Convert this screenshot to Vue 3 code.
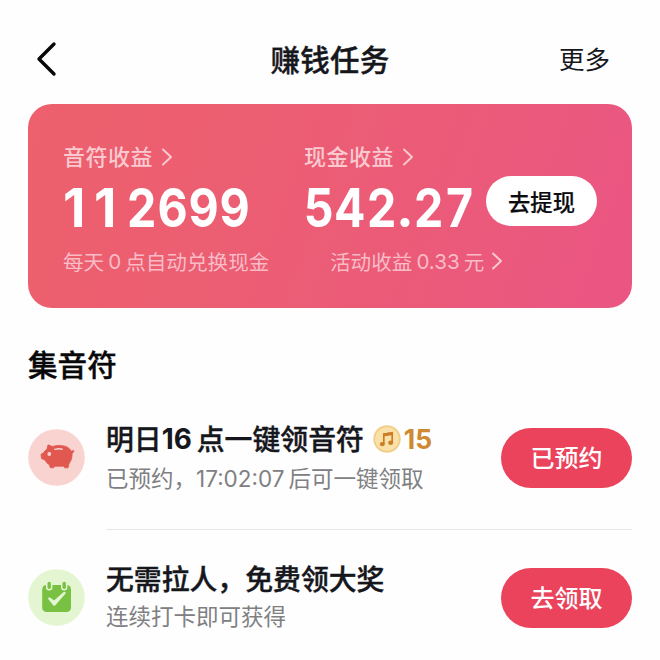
<script setup>
const tasks = [
  {
    id: 'piggy',
    title: ['明日', '16', '点一键领音符'],
    desc: ['已预约，', '17:02:07', '后可一键领取'],
    reward: '15',
    action: '已预约',
  },
  {
    id: 'calendar',
    title: ['无需拉人，免费领大奖'],
    desc: ['连续打卡即可获得'],
    action: '去领取',
  },
]
const notes = [...'112699']
const cash = [...'542.27']
const isNumber = (s) => /^\d/.test(s)
const digitClass = (c) => ({ one: c === '1', dot: c === '.' })
</script>

<template>
  <main class="page">
    <header class="nav">
      <svg class="back" width="22" height="36" viewBox="0 0 22 36">
        <path d="M18 3 3 18 18 33" />
      </svg>
      <h1>赚钱任务</h1>
      <span class="more">更多</span>
    </header>

    <section class="card">
      <div class="col notes">
        <div class="label">
          <span>音符收益</span>
          <svg width="12" height="18" viewBox="0 0 12 18"><path d="M2 1.500 10 9 2 16.500" /></svg>
        </div>
        <div class="amount"><span v-for="(c, i) in notes" :key="i" :class="digitClass(c)">{{ c }}</span></div>
        <div class="hint">每天<span class="num">0</span>点自动兑换现金</div>
      </div>
      <div class="col cash">
        <div class="label">
          <span>现金收益</span>
          <svg width="12" height="18" viewBox="0 0 12 18"><path d="M2 1.500 10 9 2 16.500" /></svg>
        </div>
        <div class="amount"><span v-for="(c, i) in cash" :key="i" :class="digitClass(c)">{{ c }}</span></div>
        <div class="hint activity">
          活动收益<span class="num">0.33</span>元
          <svg width="12" height="18" viewBox="0 0 12 18"><path d="M2 1.500 10 9 2 16.500" /></svg>
        </div>
      </div>
      <button class="withdraw">去提现</button>
    </section>

    <h2>集音符</h2>

    <section class="list">
      <article v-for="task in tasks" :key="task.id" class="task" :class="task.id">
        <svg v-if="task.id === 'piggy'" class="icon" viewBox="0 0 57 57">
          <circle cx="28.500" cy="28.500" r="28.300" fill="#f9d3cf" />
          <path
            fill="#e0584f"
            stroke="#e0584f"
            stroke-width="0.800"
            stroke-linejoin="round"
            d="M20 15.800 24.500 17.600C28 16 35 15.900 39.500 18.200 41.400 19.400 42.600 20.900 43.200 22.200 44.200 22.200 44.800 21.300 45.800 21.600 46.200 22.300 45.200 23.800 44.100 24.400 44.300 28.300 43.200 31.800 41 34.800L40 38.800H36.600L35.700 37.200H26.800L25.800 38.800H22.400L21.400 35.800C19.400 34.600 18 33 17 31L13.500 29.600 13 25.300 15.600 23.800C16.400 22.300 17.400 21.200 18.900 20.300Z"
          />
          <circle cx="21.300" cy="25" r="1.900" fill="#f9d3cf" />
          <path d="M26.800 20.400Q30.500 19.300 34.200 20.200" fill="none" stroke="#f9d3cf" stroke-width="1.400" stroke-linecap="round" />
        </svg>
        <svg v-else class="icon" viewBox="0 0 57 57">
          <circle cx="28.500" cy="28.500" r="28.300" fill="#e3f6d1" />
          <rect x="14.200" y="16" width="28.800" height="27" rx="4.300" fill="#79c142" />
          <rect x="18" y="11" width="6.400" height="10.500" rx="3.200" fill="#e3f6d1" />
          <rect x="33" y="11" width="6.400" height="10.500" rx="3.200" fill="#e3f6d1" />
          <rect x="19.500" y="12.800" width="3.400" height="7.200" rx="1.700" fill="#79c142" />
          <rect x="34.500" y="12.800" width="3.400" height="7.200" rx="1.700" fill="#79c142" />
          <path d="M21.300 29.600 26.200 35.600 36.500 24 26.200 33Z" fill="#e3f6d1" stroke="#e3f6d1" stroke-width="2.400" stroke-linejoin="round" />
        </svg>

        <div class="info">
          <div class="title">
            <span v-for="part in task.title" :key="part" :class="isNumber(part) ? 'num' : 'han'">{{ part }}</span>
            <template v-if="task.reward">
              <svg class="coin" width="28" height="28" viewBox="0 0 28 28">
                <circle cx="14" cy="14" r="13.700" fill="#f2cf88" />
                <circle cx="14" cy="14" r="11.800" fill="#fae0a9" />
                <path d="M10.800 19V9.200L19.200 7.800V17.700" fill="none" stroke="#cb7f27" stroke-width="1.700" />
                <path d="M10 8.600 20 7V10L10 11.600Z" fill="#cb7f27" />
                <ellipse cx="9.300" cy="19.100" rx="2.500" ry="2.200" fill="#cb7f27" />
                <ellipse cx="17.700" cy="17.800" rx="2.500" ry="2.200" fill="#cb7f27" />
              </svg>
              <span class="reward">{{ task.reward }}</span>
            </template>
          </div>
          <div class="desc">
            <span v-for="part in task.desc" :key="part" :class="isNumber(part) ? 'num' : 'han'">{{ part }}</span>
          </div>
        </div>
        <button class="action">{{ task.action }}</button>
      </article>
    </section>
  </main>
</template>

<style>
body {
  margin: 0;
  background: #fefefe;
}
</style>

<style scoped>
.page {
  box-sizing: border-box;
  width: 660px;
  height: 660px;
  padding: 0 28px;
  overflow: hidden;
  background: #fefefe;
  color: #16171c;
  font-family: "Noto Sans CJK SC", sans-serif;
  white-space: nowrap;
}
h1,
h2 {
  margin: 0;
  font-weight: 500;
  -webkit-text-stroke: 0.4px currentColor;
}
button {
  box-sizing: border-box;
  border: 0;
  padding: 0;
  font: inherit;
}
.nav {
  display: grid;
  grid-template-columns: 1fr auto 1fr;
  align-items: center;
  height: 104px;
  padding: 12px 22px 0 8px;
  box-sizing: border-box;
}
.back {
  margin-top: 2px;
}
.back path {
  fill: none;
  stroke: #08080b;
  stroke-width: 3.4;
  stroke-linecap: round;
  stroke-linejoin: round;
}
h1 {
  margin: 0 -7px 0 7px;
  font-size: 29.5px;
  line-height: 40px;
  letter-spacing: 0.3px;
}
.more {
  justify-self: end;
  font-size: 25.5px;
  line-height: 40px;
}
.card {
  display: flex;
  box-sizing: border-box;
  width: 604px;
  height: 204px;
  padding: 37px 35px 0;
  border-radius: 24px;
  background: linear-gradient(110deg, #ed606c 0%, #ec5e72 35%, #eb5a7a 70%, #ea5583 100%);
}
.col {
  display: flex;
  flex-direction: column;
  flex: none;
}
.notes {
  width: 241px;
}
.cash {
  width: 182px;
}
.label {
  display: flex;
  align-items: center;
  gap: 8px;
  height: 31px;
  margin-bottom: 1px;
  color: #fbc9d0;
  font-size: 22px;
  font-weight: 500;
  letter-spacing: 0.5px;
}
.label span {
  padding-bottom: 4px;
}
.card svg {
  flex: none;
}
.card svg path {
  fill: none;
  stroke: #fbc9d0;
  stroke-width: 1.9;
  stroke-linecap: round;
  stroke-linejoin: round;
}
.amount {
  display: flex;
  height: 68px;
  color: #fff;
  font-family: Inter, sans-serif;
  font-size: 53.5px;
  font-weight: 700;
  line-height: 69px;
}
.amount span {
  display: flex;
  justify-content: center;
  width: 31.3px;
  transform: scaleX(0.87);
}
.amount .one {
  justify-content: flex-start;
  transform: scaleX(0.97);
  transform-origin: left;
}
.amount .dot {
  width: 16px;
  transform: none;
}
.cash .amount {
  margin-left: -1px;
}
.hint {
  display: flex;
  align-items: center;
  height: 40px;
  color: #f9bbc6;
  font-size: 20.6px;
}
.activity {
  margin-left: 26px;
}
.activity svg {
  margin-left: 7px;
}
.num {
  font-family: Inter, sans-serif;
}
.hint .num {
  margin: 0 4px;
}
.withdraw {
  flex: none;
  width: 111px;
  height: 50px;
  margin-top: 35px;
  border-radius: 25px;
  background: #fff;
  color: #0c0c10;
  font-size: 22.3px;
  font-weight: 500;
  -webkit-text-stroke: 0.2px currentColor;
}
h2 {
  margin-top: 35px;
  margin-bottom: 1px;
  color: #08080b;
  font-size: 29.6px;
  line-height: 42px;
}
.task {
  display: flex;
  box-sizing: border-box;
  height: 140px;
}
.icon {
  width: 57px;
  height: 57px;
  margin-top: 43px;
}
.info {
  flex: 1;
  margin-left: 21px;
  padding-top: 33px;
}
.piggy .info {
  margin-right: -131px;
  border-bottom: 1.5px solid #e6e6e8;
}
.task.piggy {
  height: 144px;
}
.calendar .icon {
  margin-top: 39px;
}
.calendar .info {
  padding-top: 29px;
}
.title {
  display: flex;
  align-items: center;
  height: 40px;
  font-size: 27.85px;
  font-weight: 500;
}
.title .han {
  padding-bottom: 3px;
  -webkit-text-stroke: 0.4px currentColor;
}
.title .num {
  margin-right: 5px;
  font-weight: 700;
}
.coin {
  margin-left: 9px;
}
.reward {
  margin-left: 3px;
  color: #cf8930;
  font-family: Inter, sans-serif;
  font-size: 26.5px;
  font-weight: 700;
}
.desc {
  display: flex;
  align-items: center;
  height: 38px;
  color: #808083;
  font-size: 22.5px;
}
.desc .han {
  padding-bottom: 2px;
}
.calendar .desc {
  height: 34px;
}
.desc .num {
  margin-right: 4px;
}
.action {
  width: 131px;
  height: 60px;
  margin-top: 42px;
  padding-bottom: 3px;
  border-radius: 30px;
  background: #ea435b;
  color: #fff;
  font-size: 24px;
  font-weight: 500;
}
.calendar .action {
  margin-top: 38px;
}
</style>
